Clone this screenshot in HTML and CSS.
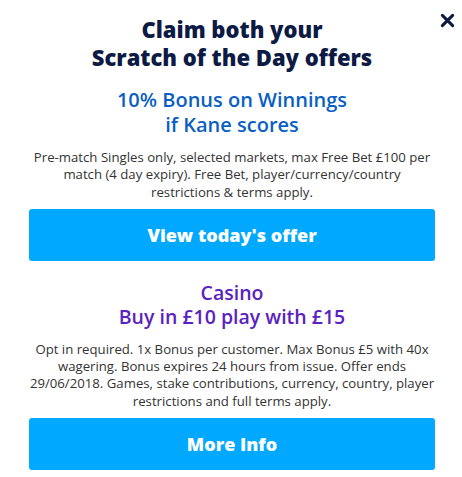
FILE: index.html
```html
<!DOCTYPE html>
<html lang="en">
<head>
<meta charset="utf-8">
<link rel="stylesheet" href="styles.css">
</head>
<body>
<div class="modal">
  <button class="close" aria-label="Close">
    <svg width="15" height="15" viewBox="0 0 16 16"><path d="M2.5 2.5L13.5 13.5M13.5 2.5L2.5 13.5" stroke="#0c1a44" stroke-width="3.2" stroke-linecap="round"/></svg>
  </button>
  <h1 class="title">Claim both your<br>Scratch of the Day offers</h1>
  <h2 class="offer offer-blue">10% Bonus on Winnings<br>if Kane scores</h2>
  <p class="terms">Pre-match Singles only, selected markets, max Free Bet £100 per match (4 day expiry). Free Bet, player/currency/country<br>restrictions &amp; terms apply.</p>
  <a class="cta">View today's offer</a>
  <h2 class="offer offer-purple">Casino<br>Buy in £10 play with £15</h2>
  <p class="terms">Opt in required. 1x Bonus per customer. Max Bonus £5 with 40x wagering. Bonus expires 24 hours from issue. Offer ends 29/06/2018. Games, stake contributions, currency, country, player restrictions and full terms apply.</p>
  <a class="cta">More Info</a>
</div>
</body>
</html>
```
FILE: styles.css
```css
html, body {
  margin: 0;
  padding: 0;
  background: #ffffff;
}
.modal {
  position: relative;
  padding: 15px 27px 0 29px;
  display: flex;
  flex-direction: column;
  align-items: stretch;
  text-align: center;
  font-family: "Open Sans", "Liberation Sans", sans-serif;
}
.close {
  position: absolute;
  top: 13px;
  right: 7px;
  width: 15px;
  height: 15px;
  padding: 0;
  border: 0;
  background: none;
  display: flex;
}
.title {
  margin: 0;
  font-size: 22px;
  line-height: 28px;
  font-weight: 800;
  color: #0c1a44;
}
.offer {
  margin: 16px 0 0;
  font-size: 20px;
  line-height: 25px;
  font-weight: 600;
}
.offer-blue { color: #0b5fc4; }
.offer-purple { color: #5a22c0; margin-top: 20px; line-height: 24px; font-size: 19.5px; }
.terms {
  margin: 12px -2px 0;
  font-size: 13.2px;
  line-height: 17.3px;
  color: #333333;
}
.cta {
  display: flex;
  align-items: center;
  justify-content: center;
  height: 52px;
  margin-top: 8px;
  border-radius: 3px;
  background: #00a9ff;
  color: #ffffff;
  font-size: 18px;
  font-weight: 800;
}
```
